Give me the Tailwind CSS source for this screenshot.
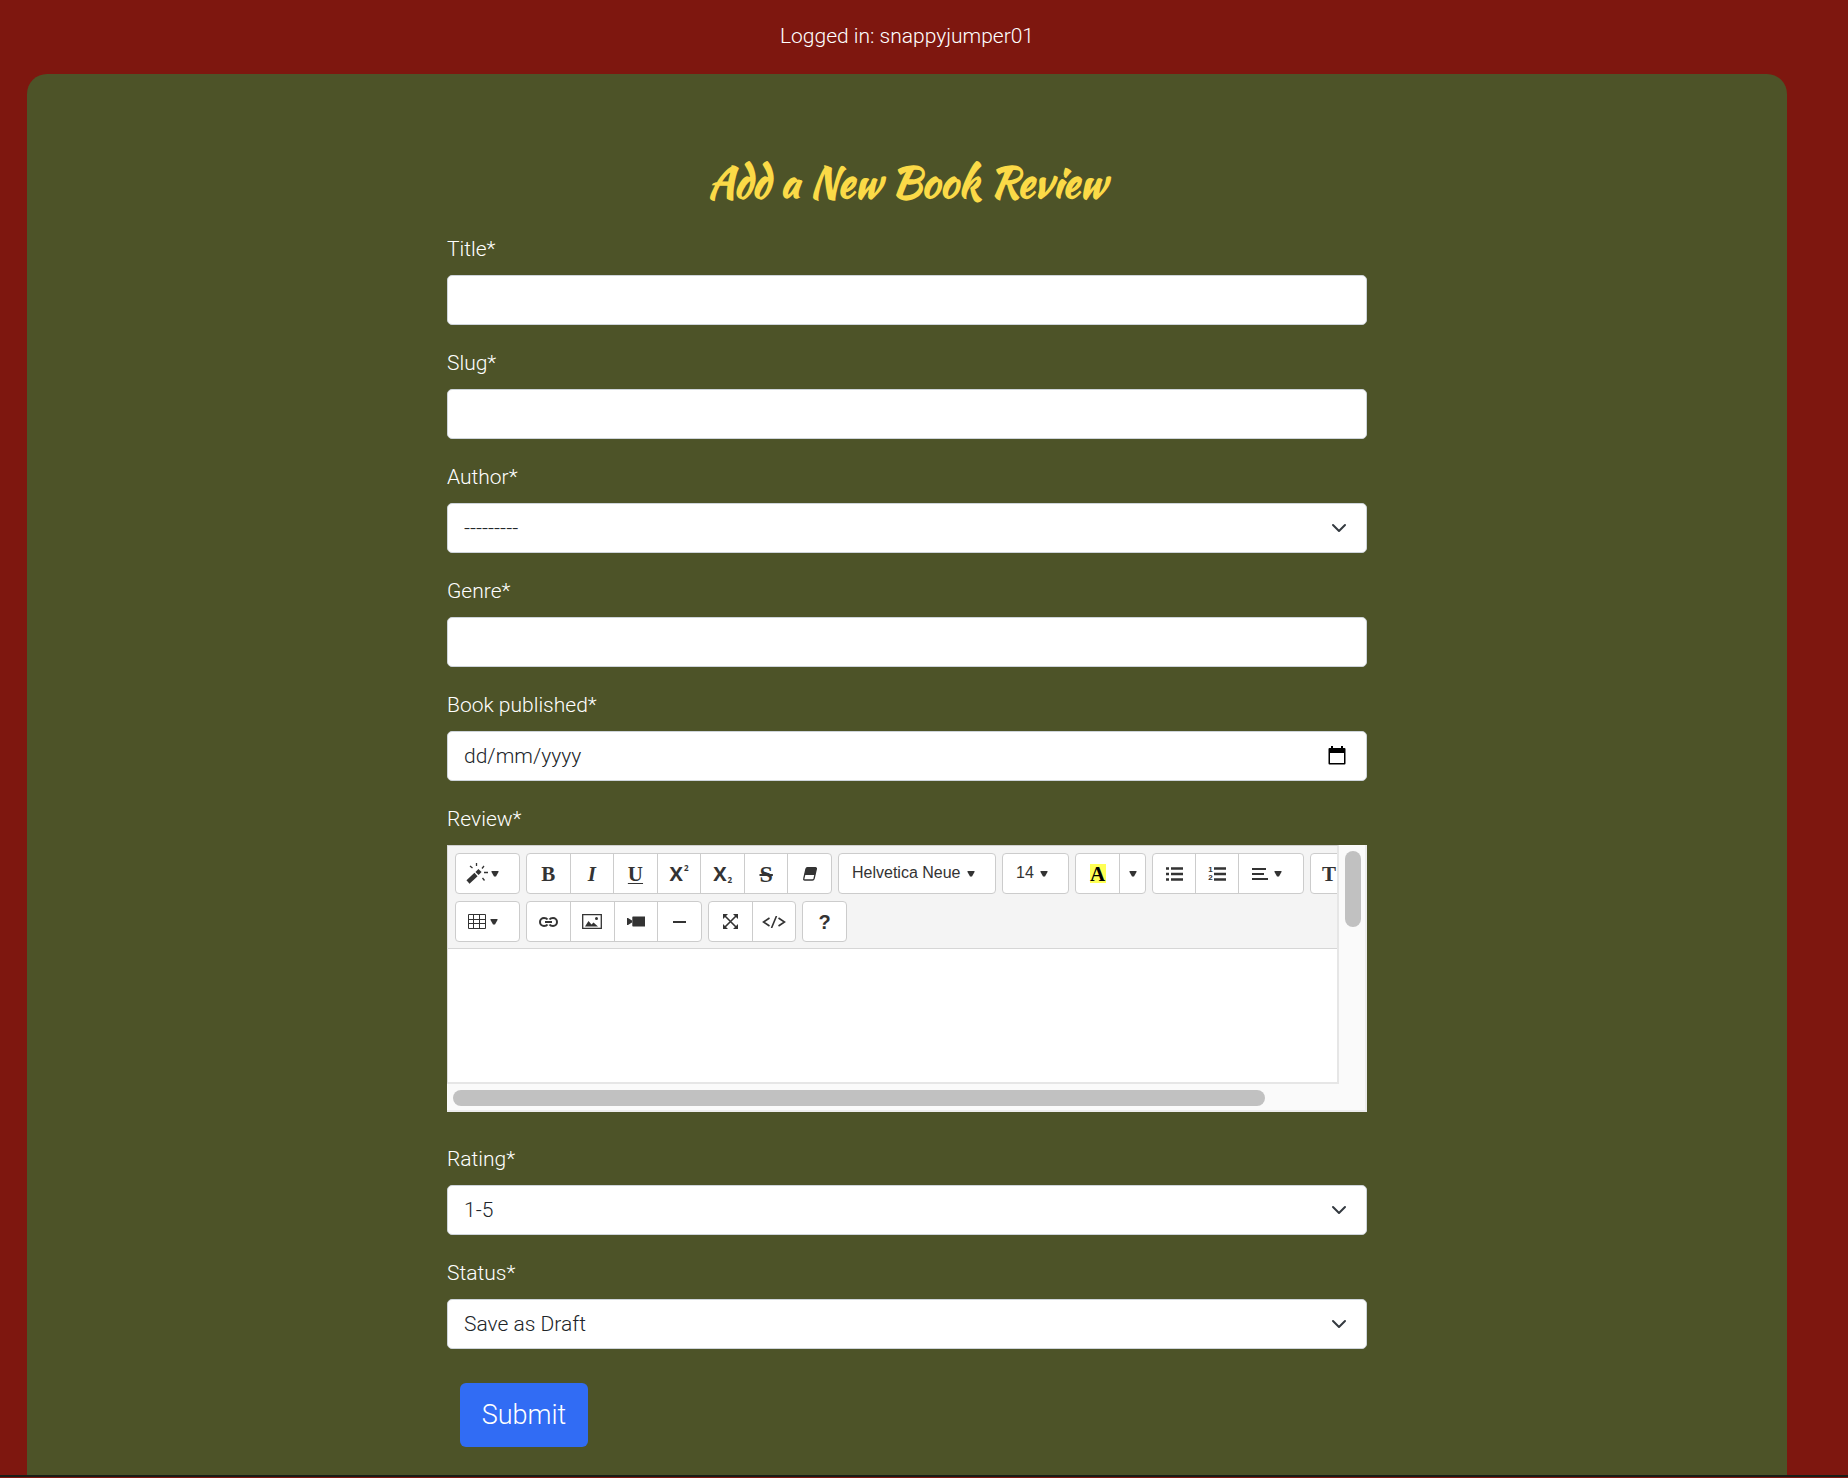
<!DOCTYPE html>
<html lang="en-GB">
<head>
<meta charset="utf-8">
<meta name="viewport" content="width=device-width, initial-scale=1">
<title>Add a New Book Review</title>
<script src="https://cdn.jsdelivr.net/npm/@tailwindcss/browser@4"></script>
</head>
<body class="bg-[#7e170f] font-['Roboto',sans-serif] text-[21px] leading-[34px] font-light text-white">
<svg class="hidden">
  <symbol id="caret" viewBox="0 0 8 6"><path d="M.5 0h7v1L5 5.500H3L.5 1z" fill="currentColor"/></symbol>
  <symbol id="chevron" viewBox="0 0 16 16"><path d="m2 5 6 6 6-6" fill="none" stroke="#343a40" stroke-width="2" stroke-linecap="round" stroke-linejoin="round"/></symbol>
</svg>
<div class="pl-[27px] pr-[61px]">
  <header class="h-[74px] pt-[19px] text-center"><p>Logged in: snappyjumper01</p></header>
  <main class="rounded-t-[20px] bg-[#4d5328] px-4 pt-[78px] pb-7">
    <form class="mx-auto max-w-[920px]">
      <h1 class="mb-5 text-center font-['Kaushan_Script','Lato',cursive] text-[42px] leading-[60px] font-bold text-[#fbda47]">Add a New Book Review</h1>

      <div class="mb-[21px]">
        <label for="title" class="mb-[9px] block">Title*</label>
        <input id="title" type="text" class="block h-[50px] w-full rounded-[5px] border border-[#ced4da] bg-white px-4 text-[#212529]">
      </div>
      <div class="mb-[21px]">
        <label for="slug" class="mb-[9px] block">Slug*</label>
        <input id="slug" type="text" class="block h-[50px] w-full rounded-[5px] border border-[#ced4da] bg-white px-4 text-[#212529]">
      </div>
      <div class="mb-[21px]">
        <label for="author" class="mb-[9px] block">Author*</label>
        <div class="relative">
          <select id="author" class="block h-[50px] w-full appearance-none rounded-[5px] border border-[#ced4da] bg-white px-4 text-[#212529]"><option>---------</option></select>
          <svg class="pointer-events-none absolute top-[17px] right-5 size-4"><use href="#chevron"/></svg>
        </div>
      </div>
      <div class="mb-[21px]">
        <label for="genre" class="mb-[9px] block">Genre*</label>
        <input id="genre" type="text" class="block h-[50px] w-full rounded-[5px] border border-[#ced4da] bg-white px-4 text-[#212529]">
      </div>
      <div class="mb-[21px]">
        <label for="published" class="mb-[9px] block">Book published*</label>
        <div class="relative">
          <input id="published" type="text" placeholder="dd/mm/yyyy" class="block h-[50px] w-full rounded-[5px] border border-[#ced4da] bg-white px-4 text-[#212529] placeholder:text-[#212529]">
          <button type="button" aria-label="Open calendar" class="absolute top-[15px] right-[21px]">
            <svg class="h-5 w-[18px]" viewBox="0 0 18 20"><path d="M3 0h2v2h8V0h2v2h1.500a1 1 0 0 1 1 1v14.500a1 1 0 0 1-1 1h-15a1 1 0 0 1-1-1V3a1 1 0 0 1 1-1H3zM2 7v10h14V7z" fill="#000" fill-rule="evenodd"/></svg>
          </button>
        </div>
      </div>

      <div class="mb-[30px]">
        <label for="review" class="mb-[9px] block">Review*</label>
        <div class="grid h-[267px] grid-cols-[minmax(0,1fr)_28px] grid-rows-[minmax(0,1fr)_28px] bg-[#fafafa]">
          <div class="flex flex-col overflow-hidden border-t border-r-2 border-b-2 border-l border-[#e6e6e6] border-t-[#cfcfcf] border-l-[#dcdcdc] bg-white">
            <div class="flex flex-col gap-[7px] border-b border-[#d6d6d6] bg-[#f4f4f4] pt-[7px] pb-1.5 pl-[7px] text-[#333]">
              <div class="flex h-[41px] gap-1.5">
                <button type="button" aria-label="Style" class="flex w-[65px] shrink-0 items-center gap-px rounded-[4px] border border-[#ccc] bg-white pl-[10px]">
                  <svg class="size-6" viewBox="0 0 24 24"><path d="m2 20 8-7.500" stroke="currentColor" stroke-width="4.500"/><path d="m11 11.500 3-3" stroke="currentColor" stroke-width="4.500"/><path d="M10.500 1v3M4 4l2.500 2M18 4l-2 2.500M18 10.500h4M16.500 16l2 2.500" stroke="currentColor" stroke-width="1.300"/></svg>
                  <svg class="h-1.5 w-2"><use href="#caret"/></svg>
                </button>
                <div class="flex w-[306px] shrink-0 divide-x divide-[#ccc] overflow-hidden rounded-[4px] border border-[#ccc] bg-white font-['Liberation_Serif',serif] text-[21px] leading-6 font-bold">
                  <button type="button" aria-label="Bold" class="flex-1">B</button>
                  <button type="button" aria-label="Italic" class="flex-1 italic">I</button>
                  <button type="button" aria-label="Underline" class="flex-1 underline decoration-1 underline-offset-2">U</button>
                  <button type="button" aria-label="Superscript" class="flex flex-1 items-center justify-center gap-px font-['Open_Sans',sans-serif] text-[20px]">X<span class="pb-3 text-[8px] leading-3">2</span></button>
                  <button type="button" aria-label="Subscript" class="flex flex-1 items-center justify-center gap-px font-['Open_Sans',sans-serif] text-[20px]">X<span class="pt-3 text-[8px] leading-3">2</span></button>
                  <button type="button" aria-label="Strikethrough" class="flex-1 text-[24px] line-through decoration-2">S</button>
                  <button type="button" aria-label="Remove formatting" class="flex flex-1 items-center justify-center">
                    <svg class="h-[14px] w-[14px]" viewBox="0 0 14 14"><path d="M4.500.7h7.800q1.300 0 1 1.300l-2.200 9.500q-.4 1.500-1.700 1.500H1.700Q.4 13 .8 11.500L3 2Q3.300.7 4.500.7z" fill="#fff" stroke="currentColor" stroke-width="1.300"/><path d="M4.500.5h8q1 0 .9 1.300L12 8H1.500L3 1.800Q3.400.5 4.500.5z" fill="currentColor"/></svg>
                  </button>
                </div>
                <button type="button" class="flex w-[158px] shrink-0 items-center gap-1.5 rounded-[4px] border border-[#ccc] bg-white pb-0.5 pl-[13px] font-['Liberation_Sans',sans-serif] text-[16px] leading-6 font-normal">Helvetica Neue<svg class="mt-0.5 h-1.5 w-2"><use href="#caret"/></svg></button>
                <button type="button" class="flex w-[67px] shrink-0 items-center gap-1.5 rounded-[4px] border border-[#ccc] bg-white pb-0.5 pl-[13px] font-['Liberation_Sans',sans-serif] text-[16px] leading-6 font-normal">14<svg class="mt-0.5 h-1.5 w-2"><use href="#caret"/></svg></button>
                <div class="flex w-[71px] shrink-0 divide-x divide-[#ccc] rounded-[4px] border border-[#ccc] bg-white">
                  <button type="button" aria-label="Text colour" class="flex w-11 items-center justify-center"><span class="h-[19px] w-4 bg-[#ffff54] text-center font-['Liberation_Serif',serif] text-[21px] leading-[21px] font-bold text-black">A</span></button>
                  <button type="button" aria-label="More colours" class="flex flex-1 items-center justify-center"><svg class="h-1.5 w-2"><use href="#caret"/></svg></button>
                </div>
                <div class="flex w-[152px] shrink-0 divide-x divide-[#ccc] rounded-[4px] border border-[#ccc] bg-white">
                  <button type="button" aria-label="Bulleted list" class="flex w-[43px] items-center justify-center"><svg class="h-[14px] w-[17px]" viewBox="0 0 17 14"><path d="M0 1.500h3M0 7h3M0 12.500h3M5 1.500h12M5 7h12M5 12.500h12" stroke="currentColor" stroke-width="2.500"/></svg></button>
                  <button type="button" aria-label="Numbered list" class="flex w-[43px] items-center justify-center gap-px font-['Liberation_Sans',sans-serif] text-[8px] leading-2 font-bold"><span>1<br>2</span><svg class="h-[14px] w-3" viewBox="0 0 12 14"><path d="M0 1.500h12M0 7h12M0 12.500h12" stroke="currentColor" stroke-width="2.500"/></svg></button>
                  <button type="button" aria-label="Paragraph" class="flex flex-1 items-center gap-1.5 pl-[13px]"><svg class="h-3 w-4" viewBox="0 0 16 12"><path d="M0 1h14M0 6h12M0 11h16" stroke="currentColor" stroke-width="2.200"/></svg><svg class="h-1.5 w-2"><use href="#caret"/></svg></button>
                </div>
                <button type="button" aria-label="Line height" class="flex w-[65px] shrink-0 items-center rounded-[4px] border border-[#ccc] bg-white pl-[11px] font-['Liberation_Serif',serif] text-[21px] leading-6 font-bold">T</button>
              </div>
              <div class="flex h-[41px] gap-1.5">
                <button type="button" aria-label="Table" class="flex w-[65px] shrink-0 items-center gap-1 rounded-[4px] border border-[#ccc] bg-white pl-3">
                  <svg class="h-[15px] w-[18px]" viewBox="0 0 18 15" fill="none" stroke="currentColor"><path d="M.5.5h17v14H.5zM.5 5.500h17M.5 9.500h17M5.500.5v14M11.500.5v14"/></svg>
                  <svg class="h-1.5 w-2"><use href="#caret"/></svg>
                </button>
                <div class="flex w-[176px] shrink-0 divide-x divide-[#ccc] rounded-[4px] border border-[#ccc] bg-white">
                  <button type="button" aria-label="Link" class="flex flex-1 items-center justify-center"><svg class="h-[10px] w-[19px]" viewBox="0 0 19 10" fill="none" stroke="currentColor" stroke-width="2"><path d="M8.500 2.500C7.500 1 6.500 1 5 1a4 4 0 0 0 0 8c1.500 0 2.500 0 3.500-1.500M10.500 2.500C11.500 1 12.500 1 14 1a4 4 0 0 1 0 8c-1.500 0-2.500 0-3.500-1.500M6 5h7"/></svg></button>
                  <button type="button" aria-label="Picture" class="flex flex-1 items-center justify-center"><svg class="h-[15px] w-5" viewBox="0 0 20 15"><path d="M.7.7h18.600v13.600H.7z" fill="none" stroke="currentColor" stroke-width="1.300"/><path d="M3 12.500 6.500 7l3 3.500 2-2 4.500 4z" fill="currentColor"/><circle cx="14.500" cy="4.500" r="1.500" fill="currentColor"/></svg></button>
                  <button type="button" aria-label="Video" class="flex flex-1 items-center justify-center"><svg class="h-[11px] w-[18px]" viewBox="0 0 18 11"><path d="M6 .5h12v10H6q-.7 0-.7-.7V1.200Q5.300.5 6 .5zM0 2h1l4 2.500v2L1 9H0z" fill="currentColor"/></svg></button>
                  <button type="button" aria-label="Horizontal rule" class="flex flex-1 items-center justify-center"><span class="h-0.5 w-[13px] bg-[#333]"></span></button>
                </div>
                <div class="flex w-[88px] shrink-0 divide-x divide-[#ccc] rounded-[4px] border border-[#ccc] bg-white">
                  <button type="button" aria-label="Full screen" class="flex flex-1 items-center justify-center"><svg class="size-[15px]" viewBox="0 0 15 15"><path d="m1.500 1.500 12 12m0-12-12 12" stroke="currentColor" stroke-width="1.600"/><path d="M0 0h5L0 5zM15 0v5l-5-5zM0 15v-5l5 5zM15 15h-5l5-5z" fill="currentColor"/></svg></button>
                  <button type="button" aria-label="Code view" class="flex flex-1 items-center justify-center"><svg class="h-3 w-6" viewBox="0 0 24 12" fill="none" stroke="currentColor" stroke-width="1.600"><path d="M7.500 2 1.500 6l6 4M16.500 2l6 4-6 4M14.500 0l-5 12"/></svg></button>
                </div>
                <button type="button" aria-label="Help" class="w-[45px] shrink-0 rounded-[4px] border border-[#ccc] bg-white font-['Liberation_Sans',sans-serif] text-[20px] leading-6 font-bold">?</button>
              </div>
            </div>
            <textarea id="review" class="w-full flex-1 resize-none bg-white p-3 text-[#212529]"></textarea>
          </div>
          <div class="border-r-2 border-[#ececec] px-[6px] pt-[6px]"><div class="h-[76px] w-4 rounded-full bg-[#c1c1c1]"></div></div>
          <div class="border-b-2 border-[#ececec] px-[6px] pt-[6px]"><div class="h-4 w-12/13 rounded-full bg-[#c1c1c1]"></div></div>
          <div class="border-r-2 border-b-2 border-[#ececec]"></div>
        </div>
      </div>

      <div class="mb-[21px]">
        <label for="rating" class="mb-[9px] block">Rating*</label>
        <div class="relative">
          <select id="rating" class="block h-[50px] w-full appearance-none rounded-[5px] border border-[#ced4da] bg-white px-4 text-[#212529]"><option>1-5</option></select>
          <svg class="pointer-events-none absolute top-[17px] right-5 size-4"><use href="#chevron"/></svg>
        </div>
      </div>
      <div class="mb-[34px]">
        <label for="status" class="mb-[9px] block">Status*</label>
        <div class="relative">
          <select id="status" class="block h-[50px] w-full appearance-none rounded-[5px] border border-[#ced4da] bg-white px-4 text-[#212529]"><option>Save as Draft</option></select>
          <svg class="pointer-events-none absolute top-[17px] right-5 size-4"><use href="#chevron"/></svg>
        </div>
      </div>
      <button type="submit" class="ml-[13px] block h-16 w-32 rounded-md bg-[#316cf4] text-[27px] leading-10">Submit</button>
    </form>
  </main>
</div>
<footer class="h-0.5 bg-[#1a1c16]"></footer>
</body>
</html>
